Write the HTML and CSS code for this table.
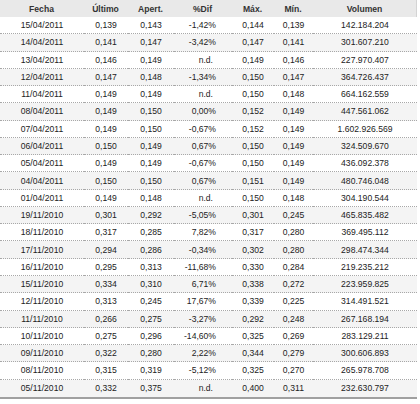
FILE: index.html
```html
<!DOCTYPE html>
<html lang="es">
<head>
<meta charset="utf-8">
<title>Cotizaciones</title>
<link rel="stylesheet" href="styles.css">
</head>
<body>
<table class="quotes">
  <colgroup>
    <col class="c-date"><col class="c-last"><col class="c-open"><col class="c-dif"><col class="c-max"><col class="c-min"><col class="c-vol">
  </colgroup>
  <thead>
    <tr><th>Fecha</th><th>Último</th><th>Apert.</th><th>%Dif</th><th>Máx.</th><th>Mín.</th><th>Volumen</th></tr>
  </thead>
  <tbody>
    <tr><td>15/04/2011</td><td>0,139</td><td>0,143</td><td class="dif">-1,42%</td><td>0,144</td><td>0,139</td><td>142.184.204</td></tr>
    <tr><td>14/04/2011</td><td>0,141</td><td>0,147</td><td class="dif">-3,42%</td><td>0,147</td><td>0,141</td><td>301.607.210</td></tr>
    <tr><td>13/04/2011</td><td>0,146</td><td>0,149</td><td class="dif nd">n.d.</td><td>0,149</td><td>0,146</td><td>227.970.407</td></tr>
    <tr><td>12/04/2011</td><td>0,147</td><td>0,148</td><td class="dif">-1,34%</td><td>0,150</td><td>0,147</td><td>364.726.437</td></tr>
    <tr><td>11/04/2011</td><td>0,149</td><td>0,149</td><td class="dif nd">n.d.</td><td>0,150</td><td>0,148</td><td>664.162.559</td></tr>
    <tr><td>08/04/2011</td><td>0,149</td><td>0,150</td><td class="dif">0,00%</td><td>0,152</td><td>0,149</td><td>447.561.062</td></tr>
    <tr><td>07/04/2011</td><td>0,149</td><td>0,150</td><td class="dif">-0,67%</td><td>0,152</td><td>0,149</td><td>1.602.926.569</td></tr>
    <tr><td>06/04/2011</td><td>0,150</td><td>0,149</td><td class="dif">0,67%</td><td>0,150</td><td>0,149</td><td>324.509.670</td></tr>
    <tr><td>05/04/2011</td><td>0,149</td><td>0,149</td><td class="dif">-0,67%</td><td>0,150</td><td>0,149</td><td>436.092.378</td></tr>
    <tr><td>04/04/2011</td><td>0,150</td><td>0,150</td><td class="dif">0,67%</td><td>0,151</td><td>0,149</td><td>480.746.048</td></tr>
    <tr><td>01/04/2011</td><td>0,149</td><td>0,148</td><td class="dif nd">n.d.</td><td>0,150</td><td>0,148</td><td>304.190.544</td></tr>
    <tr><td>19/11/2010</td><td>0,301</td><td>0,292</td><td class="dif">-5,05%</td><td>0,301</td><td>0,245</td><td>465.835.482</td></tr>
    <tr><td>18/11/2010</td><td>0,317</td><td>0,285</td><td class="dif">7,82%</td><td>0,317</td><td>0,280</td><td>369.495.112</td></tr>
    <tr><td>17/11/2010</td><td>0,294</td><td>0,286</td><td class="dif">-0,34%</td><td>0,302</td><td>0,280</td><td>298.474.344</td></tr>
    <tr><td>16/11/2010</td><td>0,295</td><td>0,313</td><td class="dif">-11,68%</td><td>0,330</td><td>0,284</td><td>219.235.212</td></tr>
    <tr><td>15/11/2010</td><td>0,334</td><td>0,310</td><td class="dif">6,71%</td><td>0,338</td><td>0,272</td><td>223.959.825</td></tr>
    <tr><td>12/11/2010</td><td>0,313</td><td>0,245</td><td class="dif">17,67%</td><td>0,339</td><td>0,225</td><td>314.491.521</td></tr>
    <tr><td>11/11/2010</td><td>0,266</td><td>0,275</td><td class="dif">-3,27%</td><td>0,292</td><td>0,248</td><td>267.168.194</td></tr>
    <tr><td>10/11/2010</td><td>0,275</td><td>0,296</td><td class="dif">-14,60%</td><td>0,325</td><td>0,269</td><td>283.129.211</td></tr>
    <tr><td>09/11/2010</td><td>0,322</td><td>0,280</td><td class="dif">2,22%</td><td>0,344</td><td>0,279</td><td>300.606.893</td></tr>
    <tr><td>08/11/2010</td><td>0,315</td><td>0,319</td><td class="dif">-5,12%</td><td>0,325</td><td>0,270</td><td>265.978.708</td></tr>
    <tr><td>05/11/2010</td><td>0,332</td><td>0,375</td><td class="dif nd">n.d.</td><td>0,400</td><td>0,311</td><td>232.630.797</td></tr>
  </tbody>
</table>
</body>
</html>
```
FILE: styles.css
```css
html, body {
  margin: 0;
  padding: 0;
  background: #ffffff;
}

.quotes {
  width: 417px;
  table-layout: fixed;
  border-collapse: separate;
  border-spacing: 0;
  font-family: "Liberation Sans", Arial, sans-serif;
  font-size: 8.6px;
  color: #222222;
  border-bottom: 2px solid #a0a0a0;
}

.c-date { width: 84px; }
.c-last { width: 44px; }
.c-open { width: 46px; }
.c-dif  { width: 58px; }
.c-max  { width: 42px; }
.c-min  { width: 39px; }
.c-vol  { width: 104px; }

.quotes th {
  height: 17px;
  padding: 0;
  background: #e9e9e9;
  color: #333333;
  font-weight: bold;
  text-align: center;
  vertical-align: middle;
  box-sizing: border-box;
  border-right: 1px solid transparent;
}

.quotes th:last-child {
  border-right: 1px solid #d4d4d4;
}

.quotes td {
  height: 17.27px;
  padding: 0;
  text-align: center;
  vertical-align: middle;
  white-space: nowrap;
  box-sizing: border-box;
  border-bottom: 1px dotted #a8a8a8;
}

.quotes tbody tr:nth-child(even) td {
  background: #f4f4f4;
}

.quotes tbody tr:last-child td {
  border-bottom: none;
}

.quotes td.dif {
  text-align: right;
  padding-right: 16px;
}

.quotes td.nd {
  padding-right: 19px;
}
```
